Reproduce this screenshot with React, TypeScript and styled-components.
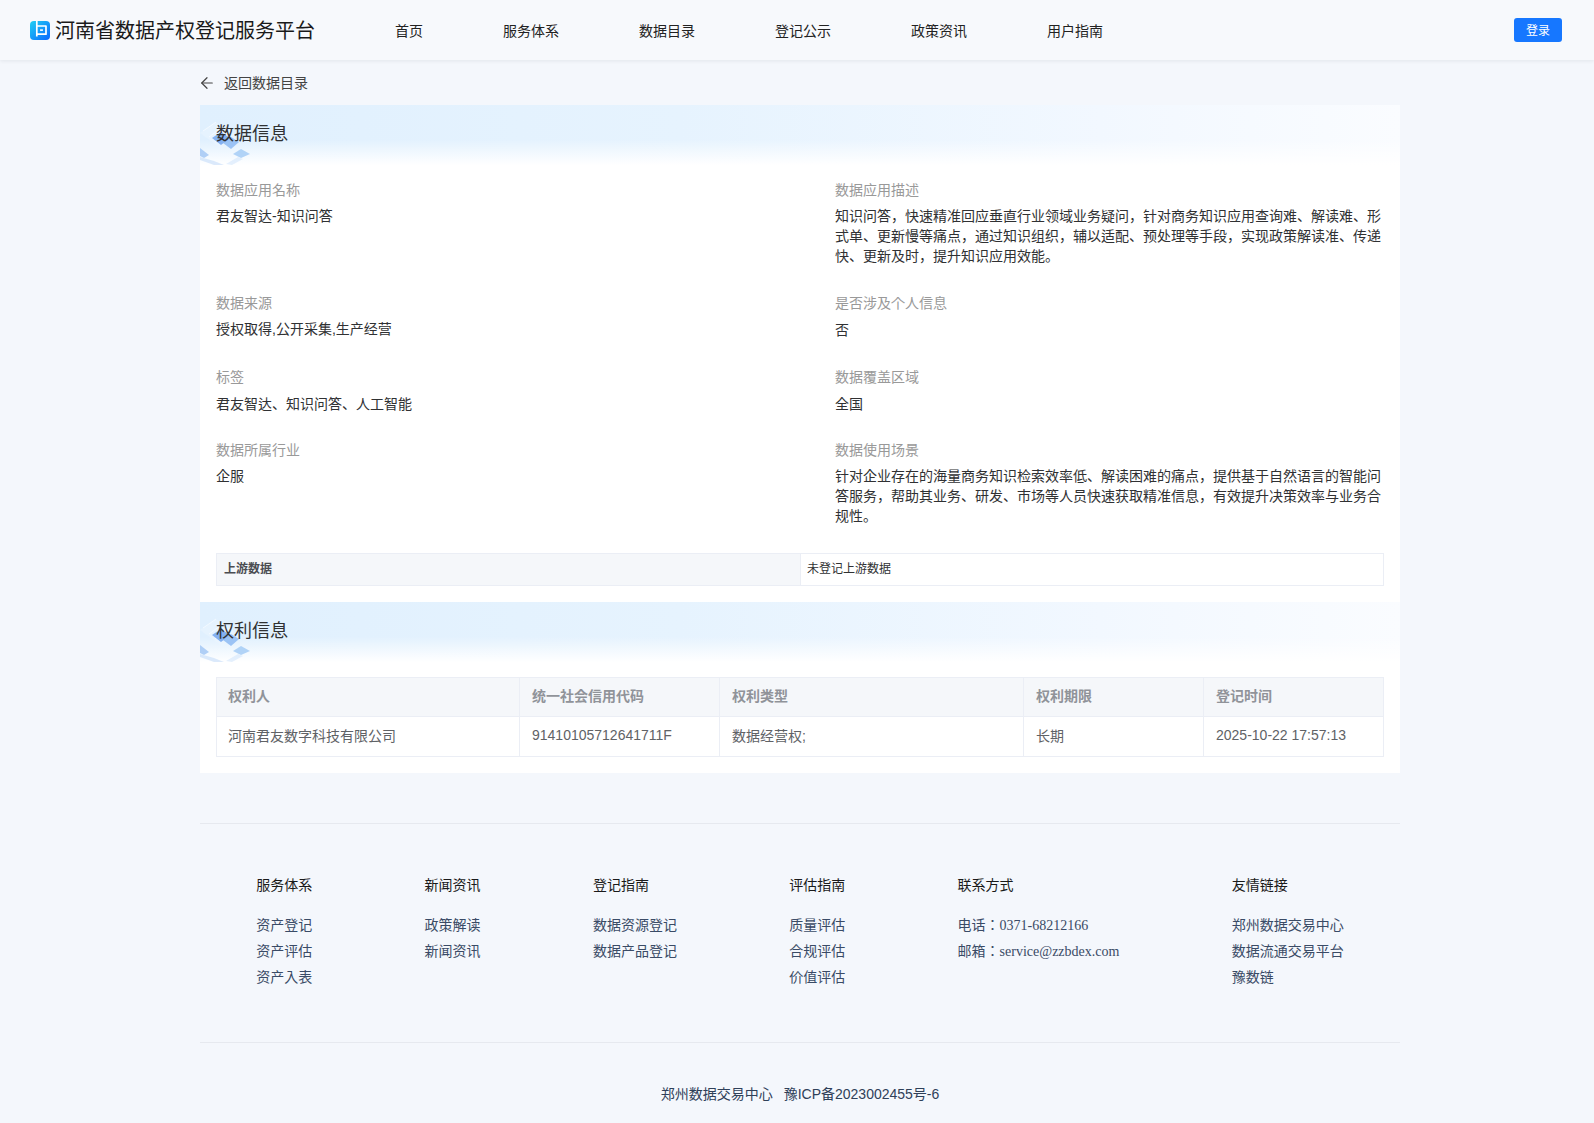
import React from 'react';
import styled, { createGlobalStyle } from 'styled-components';
import { ArrowLeft } from 'lucide-react';

const GlobalStyle = createGlobalStyle`
  html, body {
    margin: 0;
    padding: 0;
    background: #f4f7fc;
    font-family: "Liberation Sans", "Noto Sans CJK JP", sans-serif;
  }
`;

const Page = styled.div`
  width: 1594px;
  min-height: 1123px;
`;

const Header = styled.header`
  height: 60px;
  display: flex;
  align-items: center;
  padding: 0 32px 0 30px;
  background: #f7f9fc;
  box-shadow: 0 1px 4px rgba(0, 21, 41, 0.08);
`;

const Brand = styled.div`
  display: flex;
  align-items: center;
  gap: 5px;
  width: 365px;
  flex-shrink: 0;
  font-size: 20px;
  color: #1a1a1a;
`;

const BrandName = styled.span`
  padding-bottom: 2px;
`;

const Nav = styled.nav`
  display: flex;
  gap: 80px;
  flex: 1;
  font-size: 14px;
  color: #222;
`;

const LoginButton = styled.button`
  width: 48px;
  height: 24px;
  padding: 0 0 2px;
  border: 0;
  border-radius: 3px;
  background: #1677ff;
  color: #fff;
  font: inherit;
  font-size: 12px;
`;

const Main = styled.main`
  width: 1200px;
  margin-left: 200px;
`;

const BackRow = styled.div`
  height: 43px;
  padding-bottom: 2px;
  display: flex;
  align-items: center;
  gap: 8px;
  font-size: 14px;
  color: #444;

  svg {
    margin: 3px 0 0 -2px;
  }
`;

const Panel = styled.section`
  background: #fff;
`;

const SectionHead = styled.div`
  position: relative;
  height: 60px;
  display: flex;
  align-items: center;
  padding-left: 16px;
  overflow: hidden;
  font-size: 18px;
  color: #303133;
  background:
    linear-gradient(180deg, rgba(255, 255, 255, 0) 58%, #fff 100%),
    linear-gradient(90deg, #e0f0fe 0%, #e6f3fe 40%, #f2f8ff 75%, #fafcff 100%);
`;

const HeadTitle = styled.span`
  position: relative;
  top: -3px;
`;

const Decor = styled.svg`
  position: absolute;
  left: 0;
  top: 0;
`;

const SectionBody = styled.div`
  padding: 15px 16px 16px;
`;

const FieldGrid = styled.div`
  display: grid;
  grid-template-columns: 549px 549px;
  column-gap: 70px;
  row-gap: 27px;
  margin-bottom: 27px;
`;

const Field = styled.div`
  font-size: 14px;
  line-height: 20px;
`;

const FieldLabel = styled.div`
  color: #999;
  margin-bottom: 6px;
`;

const FieldValue = styled.div<{ $top?: number; $bottom?: number }>`
  color: #303133;
  padding-top: ${(p) => p.$top ?? 0}px;
  margin-bottom: ${(p) => p.$bottom ?? 0}px;
`;

const Upstream = styled.div`
  display: grid;
  grid-template-columns: 584px 1fr;
  height: 33px;
  box-sizing: border-box;
  border: 1px solid #ebeef5;
  font-size: 12px;
  line-height: 31px;
`;

const UpstreamKey = styled.div`
  padding-left: 7px;
  background: #f5f7fa;
  border-right: 1px solid #ebeef5;
  color: #4b4d52;
  font-weight: 700;
`;

const UpstreamValue = styled.div`
  padding-left: 6px;
  color: #303133;
`;

const RightsTable = styled.table`
  width: 1167px;
  table-layout: fixed;
  border-collapse: collapse;
  font-size: 14px;
`;

const RightsHeadCell = styled.th`
  height: 39px;
  padding: 0 11px 5px 12px;
  box-sizing: border-box;
  border: 1px solid #ebeef5;
  background: #f5f7fa;
  color: #909399;
  font-weight: 700;
  text-align: left;

  &:first-child {
    padding-left: 11px;
  }
`;

const RightsCell = styled.td`
  height: 40px;
  padding: 0 11px 4px 12px;
  box-sizing: border-box;
  border: 1px solid #ebeef5;
  color: #606266;

  &:first-child {
    padding-left: 11px;
  }
`;

const Footer = styled.footer`
  width: 1200px;
  margin: 50px 0 0 200px;
`;

const FooterLinks = styled.div`
  display: flex;
  justify-content: space-around;
  padding: 51px 0 52px;
  border-top: 1px solid #e6e9ef;
  border-bottom: 1px solid #e6e9ef;
`;

const FooterColumn = styled.div`
  display: flex;
  flex-direction: column;
  font-size: 14px;
`;

const FooterHeading = styled.div`
  line-height: 20px;
  margin-bottom: 17px;
  color: #1a1a1a;
`;

const FooterLink = styled.div<{ $serif?: boolean }>`
  line-height: 26px;
  color: #3a4b66;
  font-family: ${(p) =>
    p.$serif ? '"Liberation Serif", "Noto Sans CJK JP", serif' : 'inherit'};
  transform: ${(p) => (p.$serif ? 'translateY(1px)' : 'none')};
`;

const Copyright = styled.div`
  display: flex;
  justify-content: center;
  gap: 11px;
  padding: 41px 0 19px;
  font-size: 14px;
  line-height: 20px;
  color: #2f4059;
`;

const navItems = ['首页', '服务体系', '数据目录', '登记公示', '政策资讯', '用户指南'];

const fields = [
  { label: '数据应用名称', value: '君友智达-知识问答' },
  {
    label: '数据应用描述',
    value:
      '知识问答，快速精准回应垂直行业领域业务疑问，针对商务知识应用查询难、解读难、形式单、更新慢等痛点，通过知识组织，辅以适配、预处理等手段，实现政策解读准、传递快、更新及时，提升知识应用效能。',
  },
  { label: '数据来源', value: '授权取得,公开采集,生产经营' },
  { label: '是否涉及个人信息', value: '否', top: 1 },
  { label: '标签', value: '君友智达、知识问答、人工智能', top: 1, bottom: -1 },
  { label: '数据覆盖区域', value: '全国', top: 1, bottom: -1 },
  { label: '数据所属行业', value: '企服' },
  {
    label: '数据使用场景',
    value:
      '针对企业存在的海量商务知识检索效率低、解读困难的痛点，提供基于自然语言的智能问答服务，帮助其业务、研发、市场等人员快速获取精准信息，有效提升决策效率与业务合规性。',
  },
];

const rightsColumns = [
  { title: '权利人', width: 303, value: '河南君友数字科技有限公司' },
  { title: '统一社会信用代码', width: 200, value: '91410105712641711F' },
  { title: '权利类型', width: 304, value: '数据经营权;' },
  { title: '权利期限', width: 180, value: '长期' },
  { title: '登记时间', width: 180, value: '2025-10-22 17:57:13' },
];

const footerColumns = [
  { title: '服务体系', links: ['资产登记', '资产评估', '资产入表'] },
  { title: '新闻资讯', links: ['政策解读', '新闻资讯'] },
  { title: '登记指南', links: ['数据资源登记', '数据产品登记'] },
  { title: '评估指南', links: ['质量评估', '合规评估', '价值评估'] },
  { title: '联系方式', links: ['电话：0371-68212166', '邮箱：service@zzbdex.com'], serif: true },
  { title: '友情链接', links: ['郑州数据交易中心', '数据流通交易平台', '豫数链'] },
];

const Logo = () => (
  <svg width="20" height="19" viewBox="0 0 20 19">
    <defs>
      <linearGradient id="logoFill" x1="0" y1="0" x2="1" y2="1">
        <stop offset="0" stopColor="#1fd0f2" />
        <stop offset="1" stopColor="#0a66ff" />
      </linearGradient>
    </defs>
    <rect width="20" height="19" rx="4" fill="url(#logoFill)" />
    <path
      d="M6.8 0V15.5M6.8 5H16V13.2H6.8"
      fill="none"
      stroke="#fff"
      strokeWidth="1.7"
      strokeLinejoin="round"
    />
    <rect x="10" y="8.2" width="3" height="1.8" rx="0.4" fill="#e6f4ff" />
  </svg>
);

// blue crystal pattern in the corner of each section heading
const CornerDecor = () => (
  <Decor width="60" height="60" viewBox="0 0 60 60">
    <defs>
      <filter id="decorBlur" x="-20%" y="-20%" width="140%" height="140%">
        <feGaussianBlur stdDeviation="0.6" />
      </filter>
    </defs>
    <g filter="url(#decorBlur)">
      <path d="M0 28L16 17L38 32L22 44Z" fill="#eef6ff" opacity="0.45" />
      <path d="M3 26L16 17M9 32L24 21M15 37L30 26" stroke="#fff" strokeWidth="0.7" opacity="0.75" />
      <path d="M12 33L21 27L30 33L21 40Z" fill="#7aaaf0" opacity="0.9" />
      <path d="M23 38L31 32L39 37L31 44Z" fill="#8ab8f2" opacity="0.8" />
      <path d="M33 49L41 44L50 49L41 53Z" fill="#a6ccf6" opacity="0.85" />
      <path d="M0 43L9 50L4 53L0 51Z" fill="#a4c8f4" opacity="0.85" />
      <path d="M0 52L14 56L24 60H14L0 55Z" fill="#c4dcf8" opacity="0.6" />
      <path d="M26 59L38 52L43 54L32 60Z" fill="#d4e6fb" opacity="0.6" />
    </g>
  </Decor>
);

const SectionHeading = ({ title }: { title: string }) => (
  <SectionHead>
    <CornerDecor />
    <HeadTitle>{title}</HeadTitle>
  </SectionHead>
);

export default function App() {
  return (
    <Page>
      <GlobalStyle />
      <Header>
        <Brand>
          <Logo />
          <BrandName>河南省数据产权登记服务平台</BrandName>
        </Brand>
        <Nav>
          {navItems.map((item) => (
            <span key={item}>{item}</span>
          ))}
        </Nav>
        <LoginButton>登录</LoginButton>
      </Header>

      <Main>
        <BackRow>
          <ArrowLeft size={18} strokeWidth={1.6} />
          返回数据目录
        </BackRow>
        <Panel>
          <SectionHeading title="数据信息" />
          <SectionBody>
            <FieldGrid>
              {fields.map((field) => (
                <Field key={field.label}>
                  <FieldLabel>{field.label}</FieldLabel>
                  <FieldValue $top={field.top} $bottom={field.bottom}>
                    {field.value}
                  </FieldValue>
                </Field>
              ))}
            </FieldGrid>
            <Upstream>
              <UpstreamKey>上游数据</UpstreamKey>
              <UpstreamValue>未登记上游数据</UpstreamValue>
            </Upstream>
          </SectionBody>
          <SectionHeading title="权利信息" />
          <SectionBody>
            <RightsTable>
              <colgroup>
                {rightsColumns.map((col) => (
                  <col key={col.title} width={col.width} />
                ))}
              </colgroup>
              <thead>
                <tr>
                  {rightsColumns.map((col) => (
                    <RightsHeadCell key={col.title}>{col.title}</RightsHeadCell>
                  ))}
                </tr>
              </thead>
              <tbody>
                <tr>
                  {rightsColumns.map((col) => (
                    <RightsCell key={col.title}>{col.value}</RightsCell>
                  ))}
                </tr>
              </tbody>
            </RightsTable>
          </SectionBody>
        </Panel>
      </Main>

      <Footer>
        <FooterLinks>
          {footerColumns.map((col) => (
            <FooterColumn key={col.title}>
              <FooterHeading>{col.title}</FooterHeading>
              {col.links.map((link) => (
                <FooterLink key={link} $serif={col.serif}>
                  {link}
                </FooterLink>
              ))}
            </FooterColumn>
          ))}
        </FooterLinks>
        <Copyright>
          <span>郑州数据交易中心</span>
          <span>豫ICP备2023002455号-6</span>
        </Copyright>
      </Footer>
    </Page>
  );
}
